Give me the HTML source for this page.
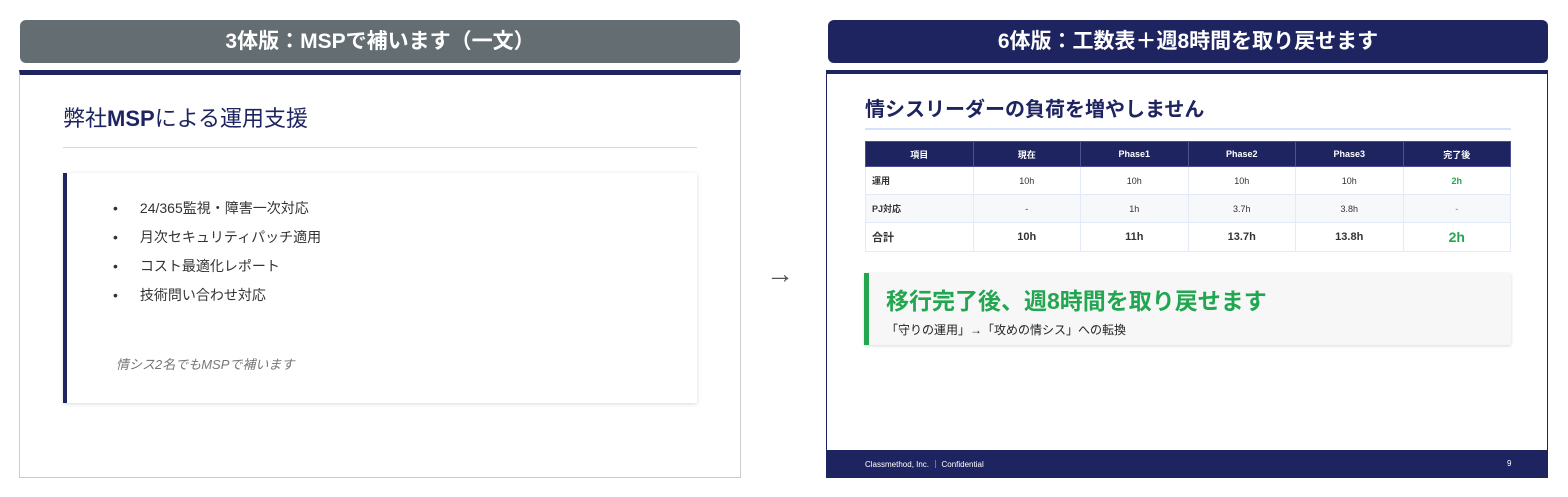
<!DOCTYPE html>
<html><head><meta charset="utf-8"><style>
*{margin:0;padding:0;box-sizing:border-box}
body{width:1568px;height:497px;background:#fff;position:relative;font-family:"Liberation Sans","Noto Sans CJK JP",sans-serif;overflow:hidden}
.a{position:absolute}
.hdr{top:20px;height:43px;width:720px;border-radius:6px;color:#fff;font-weight:bold;font-size:21px;text-align:center;line-height:43px}
.slide{top:70px;height:408px;width:722px}
td,th{border:1px solid #e3ebf8;text-align:center;font-size:9px;color:#333}
th{background:#1e2460;color:#fff;font-weight:bold;border-color:#4a5090;height:25px}
td{height:28px}
td:first-child{text-align:left;padding-left:6px}
</style></head><body>
<div class="a hdr" style="left:20px;background:#646e72">3体版：MSPで補います（一文）</div>
<div class="a slide" style="left:19px;border:1px solid #ccc;border-top:5px solid #1e2460"></div>
<div class="a" style="left:63px;top:101px;font-size:22px;color:#1e2460">弊社<b>MSP</b>による運用支援</div>
<div class="a" style="left:63px;top:147px;width:634px;height:1px;background:#c9d8f5"></div>
<div class="a" style="left:63px;top:173px;width:634px;height:230px;border-left:4px solid #1e2460;box-shadow:0 1px 4px rgba(0,0,0,.15);background:#fff"></div>
<div class="a" style="left:113px;top:194px;font-size:14px;color:#333;line-height:29px">
<div>•<span style="margin-left:22px">24/365監視・障害一次対応</span></div>
<div>•<span style="margin-left:22px">月次セキュリティパッチ適用</span></div>
<div>•<span style="margin-left:22px">コスト最適化レポート</span></div>
<div>•<span style="margin-left:22px">技術問い合わせ対応</span></div>
</div>
<div class="a" style="left:116px;top:354px;font-size:13px;color:#777;font-style:italic">情シス2名でもMSPで補います</div>
<div class="a" style="left:766px;top:258px;font-size:28px;color:#555">→</div>
<div class="a hdr" style="left:828px;background:#1e2460">6体版：工数表＋週8時間を取り戻せます</div>
<div class="a slide" style="left:826px;border:1px solid #1e2460;border-top:4px solid #1e2460"></div>
<div class="a" style="left:865px;top:93px;font-size:20px;color:#1e2460;font-weight:bold">情シスリーダーの負荷を増やしません</div>
<div class="a" style="left:865px;top:128px;width:646px;height:2px;background:#d6e2f7"></div>
<table class="a" style="left:865px;top:141px;width:646px;border-collapse:collapse;table-layout:fixed">
<tr><th>項目</th><th>現在</th><th>Phase1</th><th>Phase2</th><th>Phase3</th><th>完了後</th></tr>
<tr><td><b>運用</b></td><td>10h</td><td>10h</td><td>10h</td><td>10h</td><td style="color:#22a650;font-weight:bold">2h</td></tr>
<tr style="background:#f7f8fa"><td><b>PJ対応</b></td><td>-</td><td>1h</td><td>3.7h</td><td>3.8h</td><td style="color:#22a650">-</td></tr>
<tr><td style="font-size:11px;height:29px"><b>合計</b></td><td style="font-size:11px"><b>10h</b></td><td style="font-size:11px"><b>11h</b></td><td style="font-size:11px"><b>13.7h</b></td><td style="font-size:11px"><b>13.8h</b></td><td style="font-size:14px;color:#22a650"><b>2h</b></td></tr>
</table>
<div class="a" style="left:864px;top:273px;width:647px;height:72px;background:#f7f7f7;border-left:5px solid #22a650;box-shadow:0 1px 3px rgba(0,0,0,.15)"></div>
<div class="a" style="left:886px;top:282px;font-size:23px;font-weight:bold;color:#22a650">移行完了後、週8時間を取り戻せます</div>
<div class="a" style="left:886px;top:321px;font-size:12px;color:#222">「守りの運用」→「攻めの情シス」への転換</div>
<div class="a" style="left:827px;top:450px;width:720px;height:27px;background:#1e2460"></div>
<div class="a" style="left:865px;top:459px;font-size:8px;color:#fff">Classmethod, Inc. ｜ Confidential</div>
<div class="a" style="left:1507px;top:459px;font-size:8px;color:#fff">9</div>
</body></html>
